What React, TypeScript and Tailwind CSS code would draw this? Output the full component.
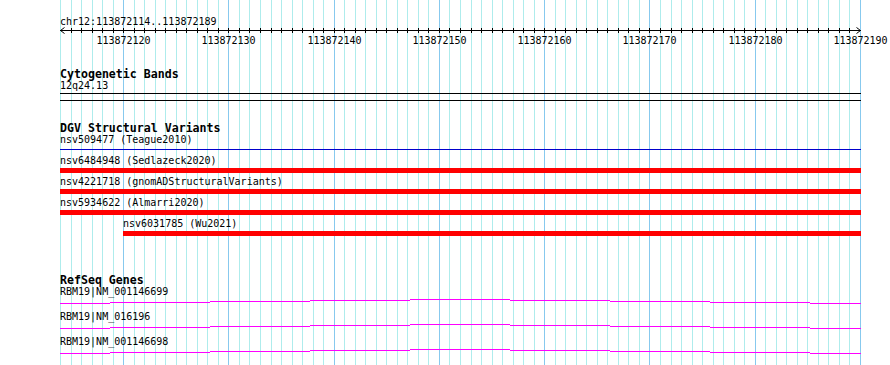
import React from "react";

const SCALE = 800 / 76;
const START = 113872114;
const xs = Array.from({ length: 77 }, (_, i) => 60 + Math.round(i * SCALE));

const MONO = "DejaVu Sans Mono, monospace";

function Grid() {
  return (
    <svg
      className="absolute left-0 top-0"
      width={890}
      height={365}
      shapeRendering="crispEdges"
    >
      {xs.map((x, i) => (
        <rect
          key={i}
          x={x}
          y={0}
          width={1}
          height={365}
          fill={(START + i) % 10 === 0 ? "#87c9ee" : "#aeecec"}
        />
      ))}
    </svg>
  );
}

function Ruler() {
  return (
    <svg width={890} height={21} className="block">
      <g shapeRendering="crispEdges">
        <rect x={60} y={3} width={801} height={1} fill="#000" />
        {xs.slice(1, 76).map((x, i) => (
          <rect key={i} x={x} y={1} width={1} height={5} fill="#000" />
        ))}
      </g>
      <path d="M64.5 0.5 L60.5 3.5 L64.5 6.5" stroke="#000" strokeWidth={1} fill="none" />
      <path d="M856.5 0.5 L860.5 3.5 L856.5 6.5" stroke="#000" strokeWidth={1} fill="none" />
      {xs.map((x, i) =>
        (START + i) % 10 === 0 ? (
          <text
            key={i}
            x={x + 0.5}
            y={17}
            textAnchor="middle"
            fontSize={10}
            fontFamily={MONO}
            fill="#000"
          >
            {START + i}
          </text>
        ) : null
      )}
    </svg>
  );
}

const dgv = [
  { label: "nsv509477 (Teague2010)", line: true, short: false },
  { label: "nsv6484948 (Sedlazeck2020)", line: false, short: false },
  { label: "nsv4221718 (gnomADStructuralVariants)", line: false, short: false },
  { label: "nsv5934622 (Almarri2020)", line: false, short: false },
  { label: "nsv6031785 (Wu2021)", line: false, short: true },
];

const genes = ["RBM19|NM_001146699", "RBM19|NM_016196", "RBM19|NM_001146698"];

const segs: [number, number, number][] = [
  [60, 110, 6],
  [110, 210, 5],
  [210, 310, 4],
  [310, 410, 3],
  [410, 510, 2],
  [510, 610, 3],
  [610, 710, 4],
  [710, 810, 5],
  [810, 861, 6],
];

function GeneLine() {
  return (
    <svg width={890} height={14} className="block" shapeRendering="crispEdges">
      {segs.map(([a, b, y], i) => (
        <rect key={i} x={a} y={y} width={b - a} height={1} fill="#ff00ff" />
      ))}
    </svg>
  );
}

const bold = "pl-[60px] text-[11.6px] font-bold leading-[12px] text-black whitespace-pre";
const reg = "text-[10px] leading-[11px] text-black whitespace-pre";

export default function App() {
  return (
    <div className="relative w-[890px] h-[365px] overflow-hidden bg-white font-['DejaVu_Sans_Mono',monospace]">
      <Grid />
      <div className="relative flex flex-col">
        <div className={`${reg} pl-[60px] mt-[16px]`}>chr12:113872114..113872189</div>
        <Ruler />

        <div className={`${bold} mt-[20px]`}>Cytogenetic Bands</div>
        <div className={`${reg} pl-[60px]`}>12q24.13</div>
        <div className="flex flex-col h-[11px] pl-[60px]">
          <div className="mt-[2px] h-px w-[801px] bg-black" />
          <div className="mt-[6px] h-px w-[801px] bg-black" />
        </div>

        <div className={`${bold} mt-[20px]`}>DGV Structural Variants</div>
        {dgv.map((f) => (
          <div key={f.label} className={`flex flex-col h-[21px] ${f.short ? "pl-[123px]" : "pl-[60px]"}`}>
            <div className={reg}>{f.label}</div>
            {f.line ? (
              <div className="mt-[2px] h-[5px] flex items-center">
                <div className="h-px w-[801px] bg-[#0000cc]" />
              </div>
            ) : (
              <div className={`mt-[2px] h-[5px] bg-[#ff0000] ${f.short ? "w-[738px]" : "w-[801px]"}`} />
            )}
          </div>
        ))}

        <div className={`${bold} mt-[35px]`}>RefSeq Genes</div>
        {genes.map((g) => (
          <div key={g} className="flex flex-col h-[25px]">
            <div className={`${reg} pl-[60px]`}>{g}</div>
            <GeneLine />
          </div>
        ))}
      </div>
    </div>
  );
}
